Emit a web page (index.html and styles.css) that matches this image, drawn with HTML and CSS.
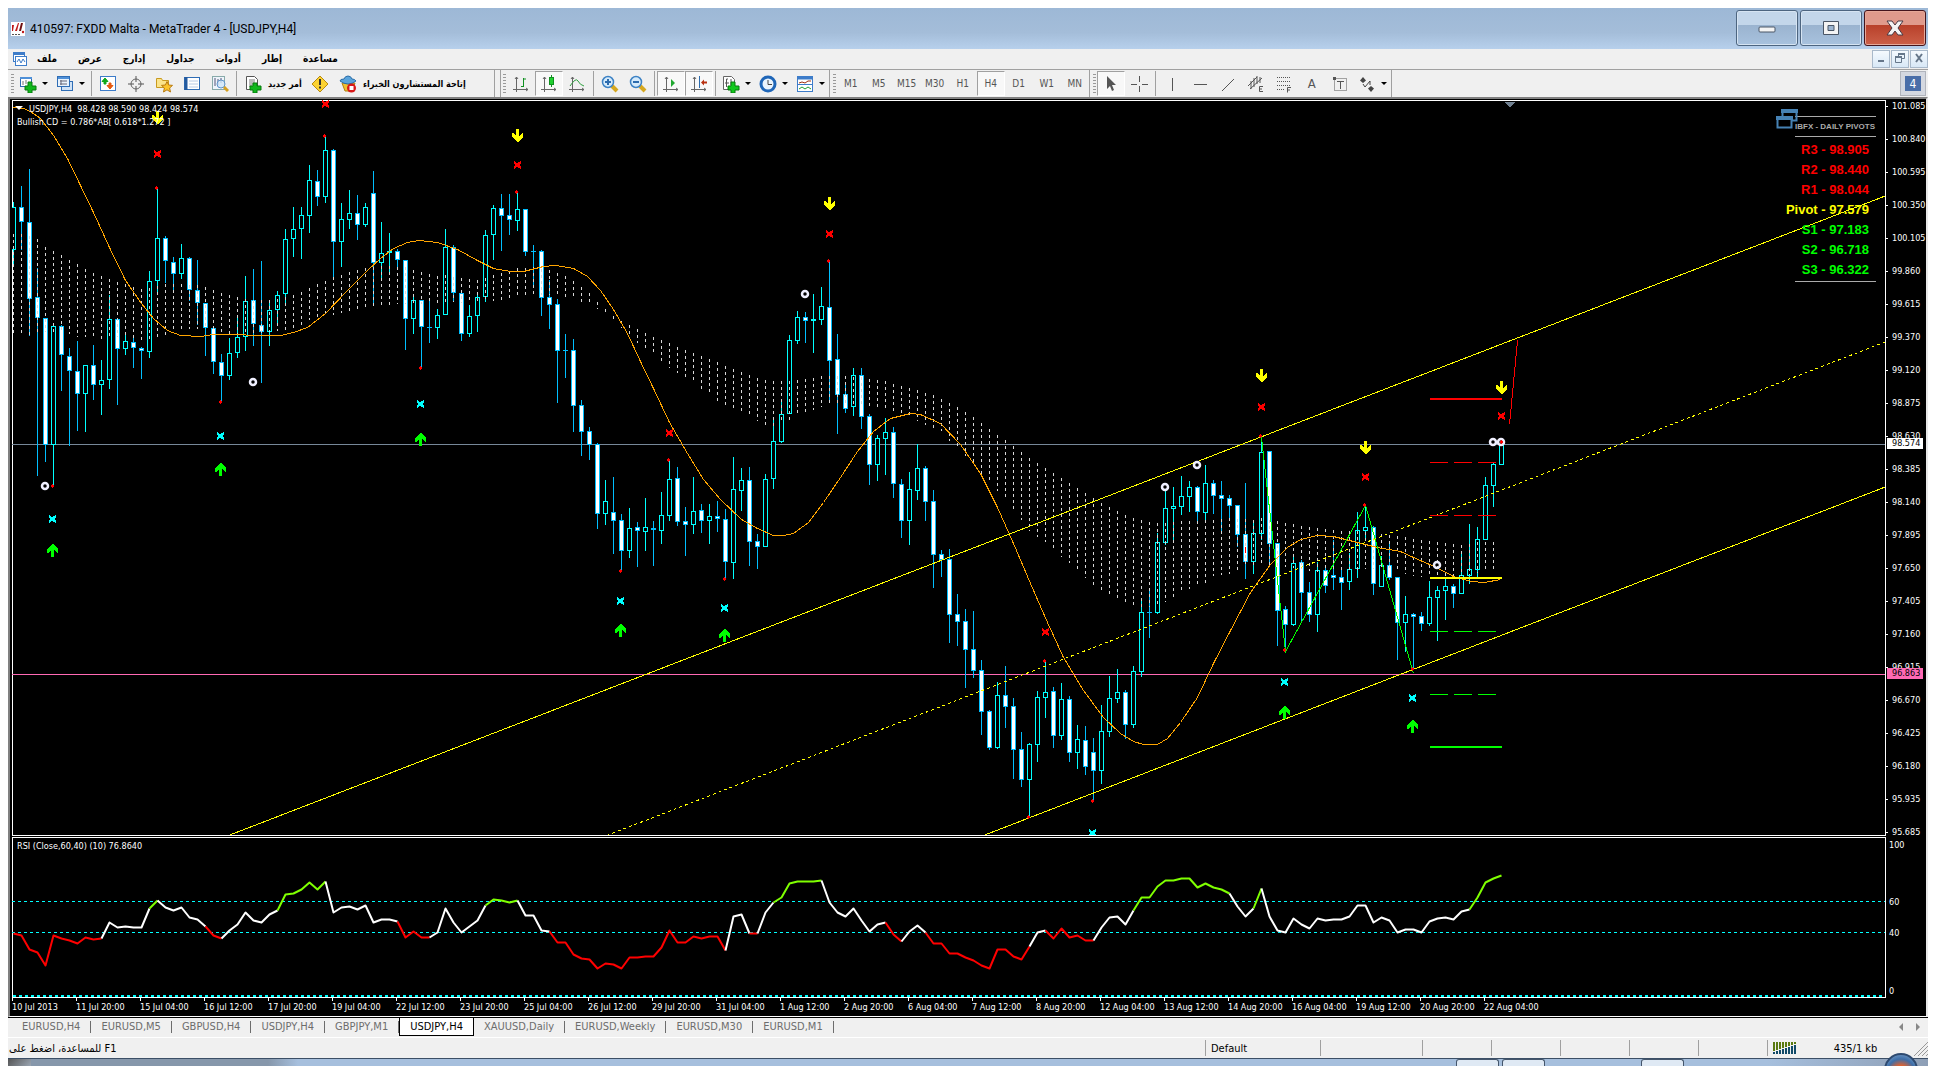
FILE: index.html
```html
<!DOCTYPE html>
<html lang="en">
<head>
    <meta charset="UTF-8">
    <meta name="viewport" content="width=device-width, initial-scale=1.0">
    <title>410597: FXDD Malta - MetaTrader 4 - [USDJPY,H4]</title>
    <link rel="stylesheet" href="styles.css">
</head>
<body>
    <header class="titlebar">
        <svg class="logo" width="14" height="14" viewBox="0 0 14 14"><rect width="14" height="14" fill="#fff"/><path d="M1 3h2l-1 6H1zM4 9L7 1h1L6 9z" fill="#c01818"/><path d="M8 9l2-8h2l-2 8z" fill="#701010"/><path d="M1 12.500h8" stroke="#555" stroke-dasharray="2 1"/><circle cx="12" cy="10" r="1.200" fill="#c01818"/></svg>
        <h1>410597: FXDD Malta - MetaTrader 4 - [USDJPY,H4]</h1>
        <div class="window-buttons">
            <button class="win" aria-label="Minimize"><svg width="20" height="20" viewBox="0 0 20 20"><rect x="2" y="9" width="16" height="5" rx="1" fill="#f4f4f4" stroke="#4a5666"/></svg></button>
            <button class="win" aria-label="Maximize"><svg width="20" height="20" viewBox="0 0 20 20"><path d="M2.500 3.500h15v13h-15zM7 7.500v5h6v-5z" fill="#f4f4f4" fill-rule="evenodd" stroke="#4a5666"/></svg></button>
            <button class="win close" aria-label="Close"><svg width="20" height="20" viewBox="0 0 20 20"><path d="M2 3h5l3 4 3-4h5l-5 7 5 7h-5l-3-4-3 4H2l5-7z" fill="#f4f4f4" stroke="#4a3a44"/></svg></button>
        </div>
    </header>

    <nav class="menu">
        <svg width="16" height="16" viewBox="0 0 16 16"><rect x="1.500" y="1.500" width="11" height="9" fill="#fff" stroke="#3d7cc9"/><path d="M1 3h12" stroke="#3d7cc9" stroke-width="2"/><rect x="3.500" y="5.500" width="11" height="9" fill="#fff" stroke="#3d7cc9"/><path d="M5 11l2-3 2 4 2-4 2 3" fill="none" stroke="#3d7cc9"/></svg>
        <a href="#">ملف</a>
        <a href="#">عرض</a>
        <a href="#">إدارج</a>
        <a href="#">جداول</a>
        <a href="#">أدوات</a>
        <a href="#">إطار</a>
        <a href="#">مساعدة</a>
        <div class="mdi-buttons">
            <button aria-label="Minimize chart"><svg width="12" height="12" viewBox="0 0 12 12"><path d="M3 9h6" stroke="#66778a" stroke-width="2"/></svg></button>
            <button aria-label="Restore chart"><svg width="12" height="12" viewBox="0 0 12 12"><path d="M4.500 4V1.500h6v5H8M1.500 4.500h6v6h-6z" fill="none" stroke="#66778a"/><path d="M4 2h7M1 5h7" stroke="#66778a" stroke-width="2"/></svg></button>
            <button aria-label="Close chart"><svg width="12" height="12" viewBox="0 0 12 12"><path d="M3 2l6 8M9 2l-6 8" stroke="#66778a" stroke-width="2"/></svg></button>
        </div>
    </nav>

    <div class="toolbar">
        <div class="group main-group">
            <button class="tool drop" aria-label="New chart"><svg width="18" height="18" viewBox="0 0 18 18"><rect x="1.500" y="2.500" width="11" height="9" fill="#fff" stroke="#2f6db5"/><path d="M1 3h12" stroke="#4f90d8" stroke-width="2"/><path d="M4 6v4M7 5v4" stroke="#777"/><path d="M9 7h4v4h4v4h-4v3H9v-3H6v-4h3z" fill="#10b81c" stroke="#067a0c"/></svg></button>
            <button class="tool drop" aria-label="Profiles"><svg width="18" height="18" viewBox="0 0 18 18"><rect x="5.500" y="6.500" width="11" height="9" fill="#cfe2f6" stroke="#2f6db5"/><rect x="1.500" y="1.500" width="12" height="10" fill="#e8f2fc" stroke="#2f6db5"/><path d="M2 3h11" stroke="#4f90d8" stroke-width="2"/><path d="M4 6h7M4 9h7M5 5v5" stroke="#667"/></svg></button>
            <span class="sep"></span>
            <button class="tool" aria-label="Market watch"><svg width="18" height="18" viewBox="0 0 18 18"><rect x="1.500" y="1.500" width="15" height="14" fill="#fff" stroke="#3d7cc9"/><path d="M6 3L3 6.500h2V9h2V6.500h2z" fill="#10a81c" stroke="#10a81c"/><path d="M11 14l-3-3.500h2V8h2v2.500h2z" fill="#e65a10" stroke="#e65a10"/></svg></button>
            <button class="tool" aria-label="Crosshair window"><svg width="18" height="18" viewBox="0 0 18 18"><circle cx="9" cy="9" r="5" fill="none" stroke="#666"/><path d="M9 1v6M9 11v6M1 9h6M11 9h6" stroke="#555"/></svg></button>
            <button class="tool" aria-label="Navigator"><svg width="18" height="18" viewBox="0 0 18 18"><path d="M1.500 12.500v-9h5l1 2h6v7z" fill="#fbe48a" stroke="#c89a20"/><path d="M12 6.500l1.600 3.500 3.900.4-2.900 2.600.9 4-3.500-2.200L8.500 17l.9-4-2.900-2.600 3.900-.4z" fill="#fcc52c" stroke="#b87a10"/></svg></button>
            <button class="tool" aria-label="Data window"><svg width="18" height="18" viewBox="0 0 18 18"><rect x="1.500" y="2.500" width="15" height="12" fill="#fff" stroke="#2f6db5"/><path d="M3 2v13" stroke="#245a9e" stroke-width="3"/><path d="M6 6h9M6 9h9M6 12h9" stroke="#b8cbe4"/></svg></button>
            <button class="tool" aria-label="Strategy tester"><svg width="18" height="18" viewBox="0 0 18 18"><rect x="1.500" y="1.500" width="12" height="13" fill="#eef4fb" stroke="#8aa"/><path d="M4 3v8M7 4v6M10 3v5" stroke="#557"/><circle cx="10" cy="9" r="4" fill="#cfe6fa" fill-opacity=".8" stroke="#5f93c8"/><path d="M13 12l4 4" stroke="#d6a020" stroke-width="3"/></svg></button>
            <span class="sep"></span>
            <button class="tool wide"><svg width="18" height="18" viewBox="0 0 18 18"><path d="M2.500 1.500h8l3 3v10h-11z" fill="#fff" stroke="#555"/><path d="M5 5h6M5 7h6M5 9h4M5 11h3" stroke="#777"/><path d="M9 8h4v3h4v4h-4v3H9v-3H6v-4h3z" fill="#10b81c" stroke="#067a0c"/></svg>أمر جديد</button>
            <button class="tool" aria-label="MetaEditor"><svg width="18" height="18" viewBox="0 0 18 18"><path d="M9 1l8 8-8 8-8-8z" fill="#fbd232" stroke="#b88a10"/><path d="M9 4v6M9 11.500v2" stroke="#333" stroke-width="2"/></svg></button>
            <button class="tool wide experts"><svg width="18" height="18" viewBox="0 0 18 18"><path d="M3 8l7 1 6-1-3 8H6z" fill="#f0c030" stroke="#b08010"/><path d="M1 6q0-2 4-2 1-3 4-3t4 3q3 0 4 2-4 3-8 3T1 6z" fill="#5aa4dc" stroke="#2b6ea8"/><circle cx="12.500" cy="13" r="4.500" fill="#d81818"/><rect x="10.500" y="11" width="4" height="4" fill="#fff"/></svg>إتاحة المستشارون الخبراء</button>
        </div>
        <div class="group">
            <button class="tool" aria-label="Bar chart"><svg width="18" height="18" viewBox="0 0 18 18"><path d="M4.500 2v15M1 14.500h15M3 4l1.500-2L6 4M14 13l2 1.500-2 1.500" fill="none" stroke="#666"/><path d="M9 11.500h2.500M11.500 3v9M11.500 4H14" stroke="#109020" fill="none"/></svg></button>
            <button class="tool pressed" aria-label="Candlesticks"><svg width="18" height="18" viewBox="0 0 18 18"><path d="M4.500 2v15M1 14.500h15M3 4l1.500-2L6 4M14 13l2 1.500-2 1.500" fill="none" stroke="#666"/><path d="M11.500 0v12" stroke="#109020"/><rect x="9.500" y="2.500" width="4" height="7" fill="#20d030" stroke="#109020"/></svg></button>
            <button class="tool" aria-label="Line chart"><svg width="18" height="18" viewBox="0 0 18 18"><path d="M4.500 2v15M1 14.500h15M3 4l1.500-2L6 4M14 13l2 1.500-2 1.500" fill="none" stroke="#666"/><path d="M2 11q6-9 8-5 2 4 6 5" fill="none" stroke="#30a040"/></svg></button>
            <span class="sep"></span>
            <button class="tool" aria-label="Zoom in"><svg width="18" height="18" viewBox="0 0 18 18"><path d="M11 11l5 5" stroke="#d6a820" stroke-width="4"/><circle cx="7" cy="7" r="5.500" fill="#d6ebfb" stroke="#3d82c4" stroke-width="1.500"/><path d="M4 7h6M7 4v6" stroke="#2d6cae" stroke-width="2"/></svg></button>
            <button class="tool" aria-label="Zoom out"><svg width="18" height="18" viewBox="0 0 18 18"><path d="M11 11l5 5" stroke="#d6a820" stroke-width="4"/><circle cx="7" cy="7" r="5.500" fill="#d6ebfb" stroke="#3d82c4" stroke-width="1.500"/><path d="M4 7h6" stroke="#2d6cae" stroke-width="2"/></svg></button>
            <span class="sep"></span>
            <button class="tool pressed" aria-label="Auto scroll"><svg width="18" height="18" viewBox="0 0 18 18"><path d="M4.500 2v15M1 14.500h15M3 4l1.500-2L6 4M14 13l2 1.500-2 1.500" fill="none" stroke="#666"/><path d="M9 4l4 4-4 4z" fill="#20a830"/></svg></button>
            <button class="tool pressed" aria-label="Chart shift"><svg width="18" height="18" viewBox="0 0 18 18"><path d="M4.500 2v15M1 14.500h15M3 4l1.500-2L6 4M14 13l2 1.500-2 1.500" fill="none" stroke="#666"/><path d="M9.500 1v12" stroke="#2d6cae"/><path d="M11 7.500l3-3v2h3v2h-3v2z" fill="#b83010"/></svg></button>
            <span class="sep"></span>
            <button class="tool drop" aria-label="Indicators"><svg width="18" height="18" viewBox="0 0 18 18"><path d="M1.500 1.500h8l3 3v10h-11z" fill="#fff" stroke="#666"/><path d="M6 4H4.500v8M3 8h4M9 4v6" stroke="#555" fill="none"/><path d="M9 7h4v4h4v4h-4v3H9v-3H6v-4h3z" fill="#10c81c" stroke="#067a0c"/></svg></button>
            <button class="tool drop" aria-label="Periods"><svg width="18" height="18" viewBox="0 0 18 18"><circle cx="9" cy="9" r="7" fill="#eaf4fd" stroke="#1f66b8" stroke-width="3"/><path d="M9 5v4.500h4" fill="none" stroke="#444"/></svg></button>
            <button class="tool drop" aria-label="Templates"><svg width="18" height="18" viewBox="0 0 18 18"><rect x="1.500" y="1.500" width="15" height="15" fill="#fff" stroke="#3d7cc9"/><path d="M1 3h16" stroke="#3d7cc9" stroke-width="3"/><path d="M2 9.500h14" stroke="#3d7cc9"/><path d="M3 8l3-1 3 1 3-2h3" fill="none" stroke="#a03010"/><path d="M3 14l3-2 3 2 3-2 3 2" fill="none" stroke="#20a030"/></svg></button>
        </div>
        <div class="group">
            <button class="tool period">M1</button>
            <button class="tool period">M5</button>
            <button class="tool period">M15</button>
            <button class="tool period">M30</button>
            <button class="tool period">H1</button>
            <button class="tool period pressed">H4</button>
            <button class="tool period">D1</button>
            <button class="tool period">W1</button>
            <button class="tool period">MN</button>
        </div>
        <div class="group">
            <button class="tool pressed" aria-label="Cursor"><svg width="18" height="18" viewBox="0 0 18 18"><path d="M5 1v13l3-3 2 5 2-1-2-5h4z" fill="#555"/></svg></button>
            <button class="tool" aria-label="Crosshair"><svg width="18" height="18" viewBox="0 0 18 18"><path d="M9.500 1v6M9.500 11v6M1 9.500h6M12 9.500h6" stroke="#555"/></svg></button>
            <span class="sep"></span>
            <button class="tool" aria-label="Vertical line"><svg width="18" height="18" viewBox="0 0 18 18"><path d="M9.500 3v13" stroke="#555"/></svg></button>
            <button class="tool" aria-label="Horizontal line"><svg width="18" height="18" viewBox="0 0 18 18"><path d="M3 9.500h13" stroke="#555"/></svg></button>
            <button class="tool" aria-label="Trendline"><svg width="18" height="18" viewBox="0 0 18 18"><path d="M3 16L15 4" stroke="#555"/></svg></button>
            <button class="tool" aria-label="Channel"><svg width="18" height="18" viewBox="0 0 18 18"><path d="M1 11L10 2M3 14L15 3M4 6v8M7 3v9M10 1v8M13 2v6" stroke="#555"/><path d="M16 11.500h-3.500v5H16M12.500 14H15" fill="none" stroke="#555"/></svg></button>
            <button class="tool" aria-label="Fibonacci"><svg width="18" height="18" viewBox="0 0 18 18"><path d="M2 2.500h14M2 6.500h14M2 10.500h14M2 14.500h8" stroke="#555" stroke-dasharray="1 1"/><path d="M16 12.500h-3.500v5M12.500 15H15" fill="none" stroke="#555"/></svg></button>
            <button class="tool letter" aria-label="Text">A</button>
            <button class="tool" aria-label="Text label"><svg width="18" height="18" viewBox="0 0 18 18"><rect x="3.500" y="3.500" width="12" height="12" fill="none" stroke="#555" stroke-dasharray="1 1"/><path d="M6 6.500h7M9.500 6v8" stroke="#555"/><path d="M2 2h3v3H2z" fill="#555"/></svg></button>
            <button class="tool drop" aria-label="Arrows"><svg width="18" height="18" viewBox="0 0 18 18"><path d="M5 2l3 3.500L5 8 2 5.500zM13 17l-3-3.500 3-2.500 3 2.500z" fill="#444"/><path d="M5 9l2 3 5-6v4" stroke="#444" fill="none"/></svg></button>
        </div>
        <button class="chat" aria-label="Messages">4</button>
    </div>

    <main class="chart">
        <section class="plot price-plot">
            <svg id="priceChart"></svg>
            <p class="caption"><span class="ohlc">USDJPY,H4&nbsp; 98.428 98.590 98.424 98.574</span><br>Bullish CD = 0.786*AB[ 0.618*1.272 ]</p>
            <div class="pivots">
                <svg class="restore" width="22" height="20" viewBox="0 0 22 20"><path d="M6.500 7V1.500h14v10H16M1.500 8.500h14v10h-14z" fill="none" stroke="#4682b4" stroke-width="2"/><path d="M5 2h17M0 9h17" stroke="#4682b4" stroke-width="4"/></svg>
                <h2>IBFX - DAILY PIVOTS</h2>
                <ul>
                    <li class="res">R3 - 98.905</li>
                    <li class="res">R2 - 98.440</li>
                    <li class="res">R1 - 98.044</li>
                    <li class="mid">Pivot - 97.579</li>
                    <li class="sup">S1 - 97.183</li>
                    <li class="sup">S2 - 96.718</li>
                    <li class="sup">S3 - 96.322</li>
                </ul>
            </div>
        </section>
        <div class="axis">
            <ul id="priceAxis"></ul>
            <span class="tag last">98.574</span>
            <span class="tag level">96.863</span>
        </div>
        <section class="plot rsi-plot">
            <svg id="rsiChart"></svg>
            <p class="caption">RSI (Close,60,40) (10) 76.8640</p>
        </section>
        <div class="axis rsi-axis">
            <span class="r100">100</span>
            <span class="r60">60</span>
            <span class="r40">40</span>
            <span class="r0">0</span>
        </div>
        <ul class="time-axis" id="timeAxis"></ul>
    </main>

    <nav class="tabs">
        <a href="#">EURUSD,H4</a>
        <a href="#">EURUSD,M5</a>
        <a href="#">GBPUSD,H4</a>
        <a href="#">USDJPY,H4</a>
        <a href="#">GBPJPY,M1</a>
        <a href="#" class="active">USDJPY,H4</a>
        <a href="#">XAUUSD,Daily</a>
        <a href="#">EURUSD,Weekly</a>
        <a href="#">EURUSD,M30</a>
        <a href="#">EURUSD,M1</a>
        <div class="tab-scroll">
            <button aria-label="Scroll left"><svg width="6" height="8" viewBox="0 0 6 8"><path d="M5 0v8L1 4z" fill="#888"/></svg></button>
            <button aria-label="Scroll right"><svg width="6" height="8" viewBox="0 0 6 8"><path d="M1 0v8l4-4z" fill="#888"/></svg></button>
        </div>
    </nav>

    <footer class="status">
        <span class="help"><bdi>للمساعدة، اضغط على</bdi> F1</span>
        <span class="cell c1">Default</span>
        <span class="cell c2"></span>
        <span class="cell c3"></span>
        <span class="cell c3"></span>
        <span class="cell c3"></span>
        <span class="cell c3"></span>
        <span class="cell c3"></span>
        <span class="cell traffic">
            <svg width="24" height="12" viewBox="0 0 24 12" id="trafficIcon"></svg>
            435/1 kb
            <svg class="sizer" width="14" height="16" viewBox="0 0 14 16"><path d="M0 16L14 2M4 16L14 6M8 16l6-6M12 16l2-2" stroke="#999"/></svg>
        </span>
    </footer>

    <div class="taskbar">
        <span class="show-desktop"></span>
        <span class="task t1"></span>
        <span class="task t2"></span>
        <span class="task t3"></span>
        <span class="orb"></span>
    </div>

    <script src="chart.js"></script>
</body>
</html>
```
FILE: styles.css
```css
* {
    box-sizing: border-box;
}
body {
    margin: 0;
    padding: 8px 8px 0;
    height: 100vh;
    display: flex;
    flex-direction: column;
    overflow: hidden;
    background-color: #fff;
    color: #000;
    font-family: 'DejaVu Sans Condensed', 'DejaVu Sans', sans-serif;
    font-size: 11px;
}
h1, h2, p, ul {
    margin: 0;
    padding: 0;
    font-size: inherit;
    font-weight: normal;
    list-style: none;
}
button {
    margin: 0;
    padding: 0;
    border: none;
    background: none;
    font: inherit;
    color: inherit;
}
a {
    color: inherit;
    text-decoration: none;
}

/* title bar */
.titlebar {
    flex: none;
    height: 41px;
    display: flex;
    align-items: center;
    gap: 5px;
    padding: 0 2px 0 3px;
    background: linear-gradient(#9db8d6, #a4bdd9 60%, #b7d0ec);
}
.titlebar h1 {
    flex: 1;
    font-family: Roboto, 'Noto Sans', sans-serif;
    font-size: 12px;
}
.window-buttons {
    display: flex;
    gap: 2px;
    align-self: flex-start;
    padding-top: 2px;
}
.win {
    width: 62px;
    height: 36px;
    display: flex;
    align-items: center;
    justify-content: center;
    border: 1px solid #4d6580;
    border-radius: 3px;
    box-shadow: inset 0 0 0 1px #d6e4f2;
    background: linear-gradient(#c3d6ea 40%, #9ab3cf 41%, #a8c2de);
}
.win.close {
    border-color: #45141c;
    box-shadow: inset 0 0 0 1px #e6a898;
    background: linear-gradient(#e09a8c 40%, #b8402a 41%, #cc6048);
}

/* menu */
.menu {
    flex: none;
    height: 20px;
    display: flex;
    align-items: center;
    gap: 21px;
    padding-left: 4px;
    background-color: #f0f0f0;
}
.menu svg {
    margin-right: -12px;
}
.menu a {
    font-size: 10px;
    line-height: 18px;
    font-weight: bold;
}
.mdi-buttons {
    margin-left: auto;
    display: flex;
    gap: 1px;
}
.mdi-buttons button {
    width: 18px;
    height: 18px;
    border: 1px solid #a9b9ca;
    background: linear-gradient(#f5fafe, #d8e8f6);
}
.mdi-buttons svg {
    margin: 0;
}

/* toolbars */
.toolbar {
    flex: none;
    height: 28px;
    display: flex;
    align-items: stretch;
    border-top: 1px solid #a0a0a0;
    background-color: #f0f0f0;
}
.group {
    display: flex;
    align-items: center;
    padding-left: 7px;
    border-right: 1px solid #a0a0a0;
    background: repeating-linear-gradient(#999 0 1px, transparent 1px 3px) 3px 4px / 3px 19px no-repeat;
}
.main-group {
    padding-right: 24px;
    margin-right: 5px;
    box-shadow: 5px 0 0 #f0f0f0, 6px 0 0 #a0a0a0;
}
.tool {
    width: 28px;
    height: 25px;
    display: flex;
    align-items: center;
    justify-content: center;
    color: #555;
    font-size: 10px;
}
.tool.pressed {
    border: 1px solid #a0a0a0;
    border-right-color: #fff;
    border-bottom-color: #fff;
    background-color: #f8f8f8;
}
.tool.drop {
    width: 37px;
    gap: 5px;
}
.tool.drop::after {
    content: '';
    border: 3px solid transparent;
    border-top-color: #000;
    border-bottom-width: 0;
}
.tool.wide {
    width: auto;
    gap: 6px;
    padding: 0 4px 0 5px;
    color: #000;
    font-weight: bold;
    font-size: 9px;
}
.tool.letter {
    font-size: 13px;
}
.sep {
    width: 1px;
    height: 25px;
    margin: 0 2px;
    background-color: #a0a0a0;
}
.chat {
    width: 26px;
    margin: 1px 2px 1px auto;
    border: 1px solid #b0b4bc;
    color: #fff;
    font-size: 12px;
    background: linear-gradient(#4a6ea8, #4a6ea8) center 4px / 16px 15px no-repeat, #d4d8e0;
}

/* chart window */
.chart {
    flex: 1;
    min-height: 0;
    display: grid;
    grid-template-columns: 1fr 40px;
    grid-template-rows: 1fr 161px 18px;
    padding: 1px 0 0 2px;
    border: 2px solid #808080;
    border-right-color: #e8e8e8;
    border-bottom: 1px solid #fff;
    background-color: #000;
    color: #fff;
    font-size: 9px;
}
.plot {
    position: relative;
    min-height: 0;
    border: 1px solid #fff;
}
.price-plot {
    margin-bottom: 1px;
}
.plot > svg {
    position: absolute;
    left: -1px;
    top: -1px;
    width: calc(100% + 1px);
    height: calc(100% + 1px);
    shape-rendering: crispEdges;
}
.caption {
    position: relative;
    padding: 2px 0 0 4px;
    line-height: 13px;
}
.ohlc::before {
    content: '';
    display: inline-block;
    margin: 0 6px 2px -2px;
    border: 4px solid transparent;
    border-top-color: #fff;
    border-bottom-width: 0;
}
.pivots {
    position: absolute;
    top: 15px;
    right: 9px;
    width: 81px;
    border-top: 1px solid #aaa;
    border-bottom: 1px solid #aaa;
    font-family: 'Liberation Sans', Arial, sans-serif;
}
.restore {
    position: absolute;
    left: -19px;
    top: -8px;
}
.pivots h2 {
    height: 20px;
    line-height: 19px;
    border-bottom: 1px solid #aaa;
    color: #aaa;
    font-size: 8px;
    font-weight: bold;
    white-space: nowrap;
}
.pivots ul {
    display: flex;
    flex-direction: column;
    align-items: flex-end;
    padding: 3px 7px 1px 0;
}
.pivots li {
    line-height: 20px;
    font-size: 13px;
    font-weight: bold;
    white-space: nowrap;
}
.res {
    color: #f00;
}
.mid {
    color: #ff0;
}
.sup {
    color: #0f0;
}
.axis {
    position: relative;
    min-height: 0;
}
.axis li {
    height: 33px;
    line-height: 12px;
    display: flex;
    gap: 4px;
}
.axis li::before {
    content: '';
    width: 2px;
    height: 1px;
    margin-top: 6px;
    background-color: #fff;
}
.tag {
    position: absolute;
    left: 1px;
    width: 36px;
    padding-left: 5px;
    line-height: 11px;
    color: #000;
}
.last {
    top: 338px;
    background-color: #fff;
}
.level {
    top: 568px;
    background-color: #ff69b4;
}
.rsi-axis span {
    position: absolute;
    left: 3px;
    line-height: 12px;
}
.r100 {
    top: 2px;
}
.r60 {
    top: 59px;
}
.r40 {
    top: 90px;
}
.r0 {
    top: 148px;
}
.time-axis {
    display: flex;
    white-space: nowrap;
}
.time-axis li {
    flex: none;
    width: 64px;
    line-height: 18px;
    background: linear-gradient(#fff, #fff) 0 0 / 1px 3px no-repeat;
}

/* chart tabs */
.tabs {
    flex: none;
    height: 21px;
    display: flex;
    padding-bottom: 1px;
    border-top: 1px solid #000;
    border-bottom: 1px solid #fff;
    background-color: #f0f0f0;
    color: #6d6d6d;
}
.tabs a {
    padding: 0 11px 0 10px;
    line-height: 17px;
    background: linear-gradient(#6d6d6d, #6d6d6d) right 3px / 1px 12px no-repeat;
}
.tabs a:first-child {
    padding-left: 14px;
}
.tabs a.active {
    border: 1px solid #000;
    border-top: none;
    padding: 0 10px;
    background: #fff;
    color: #000;
}
.tab-scroll {
    margin-left: auto;
    display: flex;
    gap: 11px;
    padding-right: 7px;
}

/* status bar */
.status {
    flex: none;
    height: 20px;
    display: flex;
    align-items: center;
    background-color: #f0f0f0;
}
.help {
    flex: 1;
    padding-left: 1px;
}
.cell {
    height: 16px;
    line-height: 17px;
    padding-left: 5px;
    border-left: 1px solid #a0a0a0;
}
.c1 {
    width: 115px;
}
.c2 {
    width: 102px;
}
.c3 {
    width: 69px;
}
.traffic {
    width: 161px;
    display: flex;
    align-items: center;
    justify-content: space-between;
}

/* windows taskbar */
.taskbar {
    flex: none;
    position: relative;
    height: 8px;
    display: flex;
    gap: 3px;
    padding-right: 244px;
    justify-content: flex-end;
    border-top: 1px solid #3c4f66;
    background: linear-gradient(90deg, #8697ab 260px, #a6bfdd 290px, #a6bfdd 1760px, #8e9fb6);
}
.show-desktop {
    width: 23px;
    margin-right: auto;
    background: linear-gradient(135deg, #555, #9aa5b2);
}
.task {
    width: 43px;
    border: 1px solid #45566c;
    border-bottom: none;
    border-radius: 3px 3px 0 0;
    background-color: #dfe9f4;
}
.t2 {
    margin-right: 93px;
}
.orb {
    position: absolute;
    right: 10px;
    top: -6px;
    width: 34px;
    height: 34px;
    border: 2px solid #2e4a70;
    border-radius: 50%;
    background: radial-gradient(circle at 50% 60%, #e8622a 0 7px, #3d6ea8 14px, #8fb0d4);
}
```
FILE: chart.js
```js
// one bar every 8px: [direction, high, body top, body bottom, low]
const STEP = 8;
const bars = `
u102,107,150,165 d86,107,122,150 d69,122,199,236 d168,197,218,376 d218,218,345,362 u225,226,345,386 d225,226,255,291 d248,256,271,346
d241,271,294,331 u265,265,294,332 d245,265,285,300 u260,280,285,315 u195,219,280,289 d219,219,249,305 u235,241,249,255 d238,242,248,268
d247,248,251,279 u171,181,252,258 u89,138,181,193 d136,138,161,183 d157,162,174,193 u144,158,174,179 d157,158,190,201 d160,190,203,225
d203,203,228,256 d228,228,262,274 d254,262,276,302 u238,253,276,280 u215,237,253,258 u176,201,237,251 d169,200,224,246 d161,225,232,283
u201,210,232,246 u191,195,210,225 u129,139,194,203 u107,129,139,157 u107,115,129,159 u65,80,116,133 d70,81,97,106 u37,50,97,103
d49,50,142,178 u103,119,142,167 u90,113,120,129 d95,113,125,140 u103,107,125,127 d71,93,163,205 u122,153,163,180 u133,151,153,175
d149,151,160,170 d160,160,219,250 u195,200,219,234 d200,200,227,268 d200,227,228,243 u209,215,228,239 u129,147,215,215 d145,147,193,202
d190,193,234,241 u205,216,234,237 u192,197,216,232 u130,135,197,202 u105,108,135,160 d94,108,116,151 d94,115,120,135 u93,109,121,131
d109,109,152,156 d145,151,152,185 d150,151,198,216 d180,197,205,229 d199,204,251,303 d234,250,251,278 d239,250,306,332 d300,305,332,356
d327,331,345,360 d343,344,414,429 u380,401,414,425 d377,412,421,454 d414,420,451,471 u408,428,451,458 d422,427,431,467 u398,427,432,451
d421,428,430,466 u392,415,431,444 u361,379,416,421 d367,378,422,426 d407,421,425,456 u377,411,425,434 d404,410,421,433 u404,416,421,444
d401,416,419,432 d409,419,462,479 u357,389,463,479 u368,380,391,411 d367,380,442,466 d434,441,447,469 u374,379,447,447 u318,341,379,389
u300,314,342,343 u235,240,314,314 u211,217,241,244 d212,217,221,243 u194,219,221,253 u187,206,220,225 d162,207,261,303 d234,259,295,334
d285,294,309,313 u268,275,307,316 d268,275,317,329 d314,316,365,385 u335,338,365,381 u318,332,339,375 d327,332,384,398 d379,384,421,438
u372,389,421,445 u344,368,391,400 d366,368,402,421 d390,401,455,488 d450,454,460,477 d449,459,515,543 d494,514,522,546 d509,521,550,588
d511,549,571,578 d560,570,612,635 d610,611,648,650 u582,595,648,649 d566,595,607,628 d598,606,650,679 d632,649,680,687 u643,644,680,717
u591,597,645,662 u562,592,598,618 d587,591,636,648 u583,599,636,640 d596,599,653,662 u625,639,653,669 d626,640,667,675 d638,652,671,701
u605,631,671,684 u576,598,632,637 u569,592,599,603 d590,592,625,639 u566,571,625,628 u500,512,572,577 d488,512,513,538 u433,442,513,514
u390,408,443,445 u387,406,409,440 u376,396,407,415 u381,387,397,412 d386,387,412,423 u365,383,413,420 d380,383,396,414 d381,395,399,433
d395,398,406,420 d405,405,435,447 d383,434,462,479 u420,433,462,474 u337,352,434,440 d351,351,444,465 d443,443,511,546 d506,509,525,550
u455,463,525,526 d460,462,493,522 d482,492,515,522 u462,470,515,532 d468,470,486,493 d440,475,478,490 d470,477,483,510 u453,469,482,490
u412,430,469,478 u406,427,431,440 d426,427,484,495 u456,465,487,487 d442,465,478,480 d477,477,523,560 u496,514,523,552 d513,514,517,569
d512,516,524,531 u481,497,524,526 u486,490,498,541 u477,486,491,520 d484,486,494,508 u452,475,494,494 u424,469,476,484 u427,439,470,477
u377,385,440,440 u363,364,386,407 u343,345,365,365`.trim().split(/\s+/);

// cloud edges, bar index : y
const cloudTop = '0:134 1:134 2:136 3:139 4:147 6:155 8:164 10:173 12:179 14:184 16:189 17:188 19:184 21:184 23:185 24:187 26:193 28:197 30:200 32:200 34:197 36:192 38:184 40:177 42:172 44:168 46:166 49:167 51:172 53:176 54:175 56:178 58:180 60:175 61:173 63:168 65:167 67:170 68:173 69:176 70:181 71:187 72:193 73:202 74:209 75:216 76:221 77:225 79:233 81:240 84:250 87:259 90:269 93:278 94:280 95:281 97:281 99:279 101:276 103:276 106:277 107:279 109:281 111:286 113:290 115:295 117:303 118:307 120:317 122:329 124:340 126:352 128:363 130:373 132:383 134:393 136:403 138:411 140:418 142:422 144:423 146:421 150:420 152:418 155:420 156:418 158:421 160:424 162:427 164:429 166:431 168:431 170:432 172:435 174:437 176:440 178:442 180:444 181:445 183:442 185:442';
const cloudBottom = '0:233 2:235 4:232 6:231 7:234 8:237 10:237 11:240 13:237 16:240 18:237 20:233 22:229 24:229 26:232 28:235 30:235 33:231 34:230 35:228 36:225 37:220 39:217 41:213 44:207 46:206 48:204 53:204 54:202 57:203 60:201 61:200 63:195 65:194 67:195 69:197 70:196 71:202 72:202 73:209 74:212 75:219 76:228 77:234 78:243 79:248 81:261 82:268 84:277 86:289 88:301 90:308 92:317 94:325 95:326 97:320 99:312 101:307 102:303 104:304 107:306 109:308 111:314 113:321 115:328 116:331 117:341 118:346 119:356 120:362 121:374 123:391 125:409 127:431 129:442 131:457 133:469 135:486 137:494 139:502 140:505 141:507 143:507 144:502 145:497 147:489 149:483 150:476 152:474 154:467 156:463 158:466 160:468 163:472 167:470 169:469 172:470 174:474 176:477 179:477 182:475 185:469';

const average = '1,7 11,8 18,11 28,18 41,35 55,58 68,85 81,112 97,147 113,180 129,203 141,218 155,230 168,235 188,236 201,234 221,234 245,235 268,235 281,232 295,227 313,213 335,190 355,170 368,158 381,148 395,142 407,140 425,142 445,149 465,160 481,168 498,171 511,171 531,166 543,165 561,168 575,176 588,190 601,209 615,233 628,261 641,288 657,322 675,353 691,379 708,399 729,419 745,428 761,435 771,435 781,433 796,422 811,402 828,377 845,351 861,331 878,318 898,313 908,314 928,323 948,344 968,373 985,407 1001,443 1018,483 1035,522 1051,557 1071,590 1091,617 1108,633 1121,641 1131,644 1145,644 1155,638 1168,622 1185,597 1201,563 1218,530 1238,492 1258,464 1275,447 1288,439 1305,435 1321,436 1345,442 1365,447 1388,451 1401,457 1424,467 1441,476 1459,481 1472,482 1488,479';

const rsi = [96,98,112,115,128,98,101,103,106,100,102,101,85,90,89,90,90,71,63,70,73,70,80,82,89,98,101,93,87,75,83,85,77,73,57,56,52,45,52,44,75,70,69,72,68,85,82,82,84,100,94,100,100,95,71,85,95,89,83,68,62,63,65,63,78,78,93,94,105,105,117,121,122,131,126,127,131,120,120,119,119,110,93,105,105,99,101,99,99,113,79,77,96,96,75,65,60,46,44,44,44,43,65,75,79,71,83,94,87,85,97,104,94,88,95,106,106,116,116,120,123,128,131,112,112,119,122,109,95,93,101,91,100,98,103,103,90,80,79,87,73,60,60,49,43,43,41,41,50,46,50,52,56,69,79,71,51,79,93,95,81,87,91,81,83,82,82,79,68,68,85,80,83,95,92,92,95,84,81,80,82,74,72,60,45,41,38];
// colour of the RSI line up to each bar
const rsiRuns = 'r11 w17 g18 w24 r26 w33 g39 w48 r52 w59 g63 w67 r89 w92 r93 w95 g101 w109 r111 w114 r127 w129 r135 w140 g152 w155 g156 w182 g186'.split(' ');

const marks = {
    down: [[145,17],[505,35],[817,103],[1249,275],[1353,347],[1489,287]],
    up: [[40,450],[208,369],[408,339],[608,530],[712,535],[1272,612],[1400,626]],
    sell: [[145,54],[313,4],[505,65],[817,134],[657,333],[1249,307],[1353,377],[1033,532],[1489,316]],
    buy: [[40,419],[208,336],[408,304],[608,501],[712,508],[1272,582],[1080,733],[1400,598]],
    ring: [[33,386],[241,282],[793,194],[1153,387],[1185,365],[1425,465],[1481,342],[1489,342]],
    dot: [[144,88],[312,36],[208,302],[408,268],[40,386],[504,92],[816,161],[656,360],[608,471],[712,479],[1248,336],[1352,405],[1272,550],[1032,561],[1080,701],[1016,717],[1400,569],[1489,342]]
};

function rect(x, y, w, h, fill) {
    return `<rect x="${x}" y="${y}" width="${w}" height="${h}" fill="${fill}"/>`;
}

function line(points, color, extra) {
    return `<polyline points="${points}" transform="translate(.5 .5)" fill="none" stroke="${color}" ${extra || ''}/>`;
}

function interpolate(text) {
    const keys = text.split(' ').map(k => k.split(':').map(Number));
    const out = [];
    for (let k = 0; k < keys.length - 1; k++) {
        const [a, ya] = keys[k];
        const [b, yb] = keys[k + 1];
        for (let i = a; i <= b; i++) {
            out[i] = Math.round(ya + (yb - ya) * (i - a) / (b - a));
        }
    }
    return out;
}

function drawPrice() {
    let s = rect(0, 344, '100%', 1, '#778899') + rect(0, 574, '100%', 1, '#ff69b4');

    bars.forEach((bar, i) => {
        const up = bar[0] === 'u';
        const [hi, top, bottom, lo] = bar.slice(1).split(',').map(Number);
        const x = 1 + i * STEP;
        const color = up ? '#00ffff' : '#00bfff';
        const h = Math.max(bottom - top, 1);
        s += rect(x, hi, 1, Math.max(lo - hi, 1), color) + rect(x - 2, top, 5, h, color);
        if (h > 2) {
            s += rect(x - 1, top + 1, 3, h - 2, up ? '#000' : '#fff');
        }
    });

    const top = interpolate(cloudTop);
    const bottom = interpolate(cloudBottom);
    top.forEach((y, i) => {
        s += `<path d="M${1.5 + i * STEP} ${y}V${bottom[i]}" stroke="#d8d8d8" stroke-dasharray="3 3"/>`;
    });

    s += line(average, '#ffa500');

    // channel, drawn past the right edge
    s += line('216,735 1874,95 3532,-545', '#ffff00');
    s += line('594,735 1874,241 3154,-253', '#ffff00', 'stroke-dasharray="3 3"');
    s += line('971,735 1874,386 2777,37', '#ffff00');

    // daily pivot levels
    s += rect(1418, 298, 72, 2, '#f00') + rect(1418, 477, 72, 2, '#ff0') + rect(1418, 646, 72, 2, '#0f0');
    [[362, '#f00'], [415, '#f00'], [531, '#0f0'], [594, '#0f0']].forEach(([y, c]) => {
        s += line(`1417,${y} 1483,${y}`, c, 'stroke-dasharray="18 6"');
    });

    s += line('1249,337 1273,551 1353,405 1401,573', '#00ff00');
    s += line('1497,324 1505,240', '#ff0000') + rect(1233, 447, 1, 6, '#f00');

    marks.down.forEach(([x, y]) => {
        s += `<path transform="translate(${x} ${y})" d="M-1-6h3v7l2-2 1-1h1v4l-5 5h-1l-5-5v-4h1l1 1 2 2z" fill="#ff0"/>`;
    });
    marks.up.forEach(([x, y]) => {
        s += `<path transform="translate(${x} ${y})" d="M-1 7h3v-7l2 2 1 1h1v-4l-5-5h-1l-5 5v4h1l1-1 2-2z" fill="#0f0"/>`;
    });
    marks.sell.forEach(([x, y]) => {
        s += `<path transform="translate(${x} ${y})" d="M-3-3L4 3M4-3L-3 3" stroke="#f00" stroke-width="2.500"/>`;
    });
    marks.buy.forEach(([x, y]) => {
        s += `<path transform="translate(${x} ${y})" d="M-3-3L4 3M4-3L-3 3" stroke="#0ff" stroke-width="2.500"/>`;
    });
    marks.ring.forEach(([x, y]) => {
        s += `<ellipse cx="${x}" cy="${y}" rx="3" ry="3" fill="none" stroke="#f0f0ff" stroke-width="2.500" shape-rendering="auto"/>`;
    });
    marks.dot.forEach(([x, y]) => {
        s += rect(x - 1, y - 1, 3, 2, '#f00') + rect(x, y - 2, 1, 4, '#f00');
    });
    s += '<path d="M1492 2h11l-5 5z" fill="#708090"/>';

    document.getElementById('priceChart').innerHTML = s;
}

function drawRsi() {
    let s = '';
    [65, 96].forEach(y => {
        s += `<line x1="0" x2="100%" y1="${y - 0.5}" y2="${y - 0.5}" stroke="#0ff" stroke-dasharray="3 3"/>`;
    });
    s += '<line x1="1" x2="100%" y1="159" y2="159" stroke="#0ff" stroke-width="2" stroke-dasharray="3 3"/>';

    const colors = { r: '#ff0000', w: '#ffffff', g: '#7fff00' };
    let from = 0;
    rsiRuns.forEach(run => {
        const to = Number(run.slice(1));
        const points = [];
        for (let i = from; i <= to; i++) {
            points.push(`${1 + i * STEP},${rsi[i]}`);
        }
        s += line(points.join(' '), colors[run[0]], 'stroke-width="2" stroke-linejoin="round" shape-rendering="auto"');
        from = to;
    });
    document.getElementById('rsiChart').innerHTML = s;
}

function fillAxes() {
    const prices = '101.085 100.840 100.595 100.350 100.105 99.860 99.615 99.370 99.120 98.875 98.630 98.385 98.140 97.895 97.650 97.405 97.160 96.915 96.670 96.425 96.180 95.935 95.685'.split(' ');
    document.getElementById('priceAxis').innerHTML = prices.map(p => `<li>${p}</li>`).join('');

    const times = ['10 Jul 2013', '11 Jul 20:00', '15 Jul 04:00', '16 Jul 12:00', '17 Jul 20:00', '19 Jul 04:00', '22 Jul 12:00', '23 Jul 20:00', '25 Jul 04:00', '26 Jul 12:00', '29 Jul 20:00', '31 Jul 04:00', '1 Aug 12:00', '2 Aug 20:00', '6 Aug 04:00', '7 Aug 12:00', '8 Aug 20:00', '12 Aug 04:00', '13 Aug 12:00', '14 Aug 20:00', '16 Aug 04:00', '19 Aug 12:00', '20 Aug 20:00', '22 Aug 04:00'];
    document.getElementById('timeAxis').innerHTML = times.map(t => `<li>${t}</li>`).join('');
}

function drawTraffic() {
    let s = '';
    for (let i = 0; i < 8; i++) {
        s += rect(i * 3, 0, 2, 9 - i, '#5a7a10') + rect(i * 3, 10 - i, 2, 2 + i, '#104a68');
    }
    document.getElementById('trafficIcon').innerHTML = s;
}

drawPrice();
drawRsi();
fillAxes();
drawTraffic();
```
